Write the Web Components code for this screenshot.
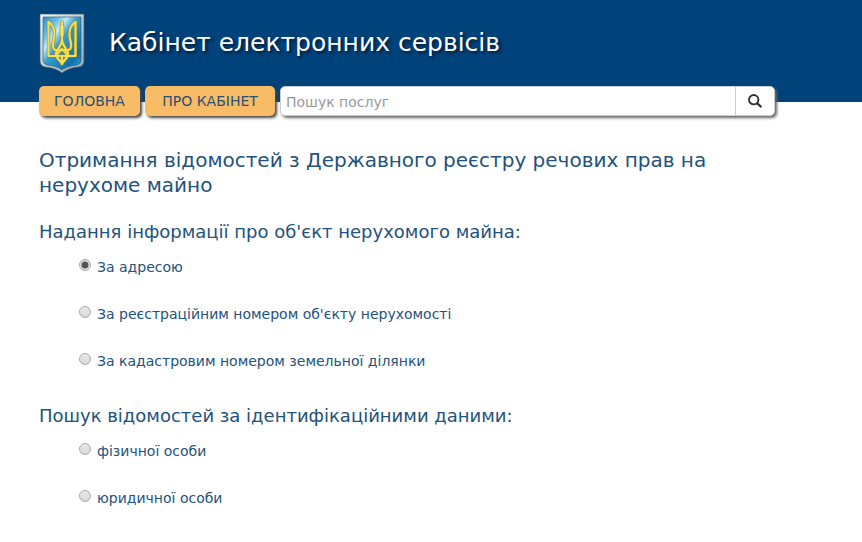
<!DOCTYPE html>
<html lang="uk">
<head>
<meta charset="utf-8">
<meta name="viewport" content="width=device-width, initial-scale=1">
<title>Кабінет електронних сервісів</title>
<style>
  body {
    margin: 0;
    background: #fff;
    color: #23527c;
    font-family: Verdana, "DejaVu Sans", sans-serif;
    font-size: 14px;
  }
</style>
</head>
<body>
<site-header>Кабінет електронних сервісів</site-header>
<site-nav>
  <nav-button>ГОЛОВНА</nav-button>
  <nav-button>ПРО КАБІНЕТ</nav-button>
  <search-box slot="search" placeholder="Пошук послуг"></search-box>
</site-nav>
<service-page>
  <span slot="title">Отримання відомостей з Державного реєстру речових прав на нерухоме майно</span>
  <option-group heading="Надання інформації про об'єкт нерухомого майна:">
    <radio-option value="address" checked>За адресою</radio-option>
    <radio-option value="regnum">За реєстраційним номером об'єкту нерухомості</radio-option>
    <radio-option value="cadnum">За кадастровим номером земельної ділянки</radio-option>
  </option-group>
  <option-group heading="Пошук відомостей за ідентифікаційними даними:">
    <radio-option value="person">фізичної особи</radio-option>
    <radio-option value="company">юридичної особи</radio-option>
  </option-group>
</service-page>

<script>
class StateEmblem extends HTMLElement {
  constructor() {
    super();
    this.attachShadow({ mode: 'open' });
  }

  connectedCallback() {
    this.shadowRoot.innerHTML = `
      <style>
        :host { display: block; }
        svg { display: block; width: 46px; height: 62px; }
      </style>
      <svg viewBox="0 0 46 62" aria-hidden="true">
        <defs>
          <linearGradient id="rim" x1="0" y1="0" x2="1" y2="1">
            <stop offset="0" stop-color="#f4f7f8"/>
            <stop offset=".5" stop-color="#c0ced5"/>
            <stop offset="1" stop-color="#93a5af"/>
          </linearGradient>
          <linearGradient id="field" x1="0" y1="0" x2="1" y2="1">
            <stop offset="0" stop-color="#2f92c8"/>
            <stop offset=".2" stop-color="#64bce2"/>
            <stop offset=".32" stop-color="#c4e8f5"/>
            <stop offset=".46" stop-color="#3b9dcd"/>
            <stop offset=".8" stop-color="#0e70ae"/>
            <stop offset="1" stop-color="#3da4d3"/>
          </linearGradient>
          <g id="trident">
            <path d="M23 10V28C23 34 18 36 17 41C16.500 47 21 47 23 52C25 47 29.500 47 29 41C28 36 23 34 23 28"/>
            <path d="M9.500 10V44H36.500V10"/>
            <path d="M9.500 10C15 14 16 18 15.500 24C15 30 12 34 15 37Q17 39 20 38"/>
            <path d="M36.500 10C31 14 30 18 30.500 24C31 30 34 34 31 37Q29 39 26 38"/>
            <path d="M18 44C19 39 22 39 23 37C24 39 27 39 28 44M23 44V51"/>
          </g>
        </defs>
        <path d="M1 2h44v47q0 5-5 6-11 1-17 6-6-5-17-6-5-1-5-6z" fill="url(#rim)" stroke="#41565f" stroke-width=".7"/>
        <path d="M4 5h38v43q0 4-4 5-10 1-15 5-5-4-15-5-4-1-4-5z" fill="url(#field)" stroke="#2c6685" stroke-width=".7"/>
        <g fill="none" stroke-linejoin="round" stroke-linecap="round">
          <use href="#trident" stroke="#8b8430" stroke-width="3.200"/>
          <path d="M23 14V23" stroke="#8b8430" stroke-width="4.400"/>
          <use href="#trident" stroke="#f5df4e" stroke-width="2.200"/>
          <path d="M23 14V23" stroke="#f8e66c" stroke-width="3.200"/>
        </g>
      </svg>
    `;
  }
}

class SiteHeader extends HTMLElement {
  constructor() {
    super();
    this.attachShadow({ mode: 'open' });
  }

  connectedCallback() {
    this.shadowRoot.innerHTML = `
      <style>
        :host { display: block; background: #00427a; }
        header {
          display: flex;
          align-items: center;
          gap: 24px;
          padding: 12px 39px 28px;
        }
        h1 {
          margin: 0;
          color: #fff;
          font-size: 25px;
          font-weight: normal;
          line-height: 32px;
          text-shadow: 2px 2px 3px #001c38;
        }
      </style>
      <header>
        <state-emblem></state-emblem>
        <h1><slot></slot></h1>
      </header>
    `;
  }
}

class SiteNav extends HTMLElement {
  constructor() {
    super();
    this.attachShadow({ mode: 'open' });
  }

  connectedCallback() {
    // the bar hangs half over the bottom edge of the header
    this.shadowRoot.innerHTML = `
      <style>
        :host { display: block; margin-top: -16px; }
        nav {
          display: grid;
          grid-template-columns: 101px 130px 1fr;
          gap: 5px;
          padding: 0 87px 0 39px;
        }
      </style>
      <nav>
        <slot></slot>
        <slot name="search"></slot>
      </nav>
    `;
  }
}

class NavButton extends HTMLElement {
  constructor() {
    super();
    this.attachShadow({ mode: 'open' });
  }

  connectedCallback() {
    this.shadowRoot.innerHTML = `
      <style>
        :host { display: block; }
        button {
          width: 100%;
          height: 30px;
          padding: 0;
          border: 0;
          border-radius: 5px;
          background: #f8bb66;
          box-shadow: 2px 2px 3px #444;
          color: #2b5070;
          font: inherit;
          white-space: nowrap;
          cursor: pointer;
        }
        button:hover { background: #fac985; }
      </style>
      <button type="button"><slot></slot></button>
    `;
  }
}

class SearchBox extends HTMLElement {
  constructor() {
    super();
    this.attachShadow({ mode: 'open' });
  }

  connectedCallback() {
    const placeholder = this.getAttribute('placeholder') || '';

    this.shadowRoot.innerHTML = `
      <style>
        :host { display: block; }
        form {
          display: flex;
          box-sizing: border-box;
          height: 30px;
          border: 1px solid #ccc;
          border-radius: 5px;
          background: #fff;
          box-shadow: 2px 2px 3px #666;
          overflow: hidden;
        }
        input {
          flex: 1;
          min-width: 0;
          padding: 2px 5px 0;
          border: 0;
          outline: 0;
          background: none;
          color: #555;
          font: inherit;
        }
        input::placeholder { color: #999; opacity: 1; }
        button {
          display: grid;
          place-items: center;
          width: 39px;
          padding: 0;
          border: 0;
          border-left: 1px solid #ccc;
          background: #fff;
          cursor: pointer;
        }
        svg { width: 14px; height: 14px; }
      </style>
      <form role="search">
        <input type="text" name="q" placeholder="${placeholder}" aria-label="${placeholder}">
        <button type="submit" aria-label="Шукати">
          <svg viewBox="0 0 14 14" fill="none" stroke="#333" aria-hidden="true">
            <circle cx="5.700" cy="5.700" r="4.700" stroke-width="1.900"/>
            <path d="M9.300 9.300l3.400 3.200" stroke-width="2.400" stroke-linecap="round"/>
          </svg>
        </button>
      </form>
    `;
    this.shadowRoot.querySelector('form').addEventListener('submit', (e) => e.preventDefault());
  }
}

class ServicePage extends HTMLElement {
  constructor() {
    super();
    this.attachShadow({ mode: 'open' });
  }

  connectedCallback() {
    this.shadowRoot.innerHTML = `
      <style>
        :host { display: block; }
        main {
          max-width: 700px;
          padding: 32px 39px 0;
        }
        h2 {
          margin: 0 0 22px;
          font-size: 20px;
          font-weight: normal;
          line-height: 25px;
        }
      </style>
      <main>
        <h2><slot name="title"></slot></h2>
        <slot></slot>
      </main>
    `;

    // radios live in separate shadow roots, so keep only one checked by hand
    this.addEventListener('option-select', (e) => {
      this.querySelectorAll('radio-option').forEach((option) => {
        if (option !== e.target) option.uncheck();
      });
    });
  }
}

class OptionGroup extends HTMLElement {
  constructor() {
    super();
    this.attachShadow({ mode: 'open' });
  }

  connectedCallback() {
    this.shadowRoot.innerHTML = `
      <style>
        :host { display: block; margin-bottom: 19px; }
        h3 {
          margin: 0;
          font-size: 18px;
          font-weight: normal;
          line-height: 24px;
        }
        .options { padding: 0 0 0 40px; }
      </style>
      <section>
        <h3 id="heading">${this.getAttribute('heading')}</h3>
        <div class="options" role="radiogroup" aria-labelledby="heading">
          <slot></slot>
        </div>
      </section>
    `;
  }
}

class RadioOption extends HTMLElement {
  constructor() {
    super();
    this.attachShadow({ mode: 'open' });
  }

  connectedCallback() {
    this.shadowRoot.innerHTML = `
      <style>
        :host { display: block; }
        label {
          display: flex;
          align-items: flex-start;
          gap: 6px;
          padding: 13px 0 14px;
          line-height: 20px;
          cursor: pointer;
        }
        input {
          appearance: none;
          flex: none;
          width: 12px;
          height: 12px;
          margin: 2px 0 0;
          border: 1px solid #a9a9a9;
          border-radius: 50%;
          background: linear-gradient(#e8e8e8, #d8d8d8);
        }
        input:checked {
          background: radial-gradient(circle, #555 0 3px, #e2e2e2 4px);
        }
      </style>
      <label>
        <input type="radio" name="search-type" value="${this.getAttribute('value')}">
        <span><slot></slot></span>
      </label>
    `;
    this.input = this.shadowRoot.querySelector('input');
    this.input.checked = this.hasAttribute('checked');
    this.input.addEventListener('change', () => {
      this.dispatchEvent(new CustomEvent('option-select', { bubbles: true }));
    });
  }

  uncheck() {
    this.input.checked = false;
  }
}

customElements.define('state-emblem', StateEmblem);
customElements.define('site-header', SiteHeader);
customElements.define('site-nav', SiteNav);
customElements.define('nav-button', NavButton);
customElements.define('search-box', SearchBox);
customElements.define('service-page', ServicePage);
customElements.define('option-group', OptionGroup);
customElements.define('radio-option', RadioOption);
</script>
</body>
</html>
